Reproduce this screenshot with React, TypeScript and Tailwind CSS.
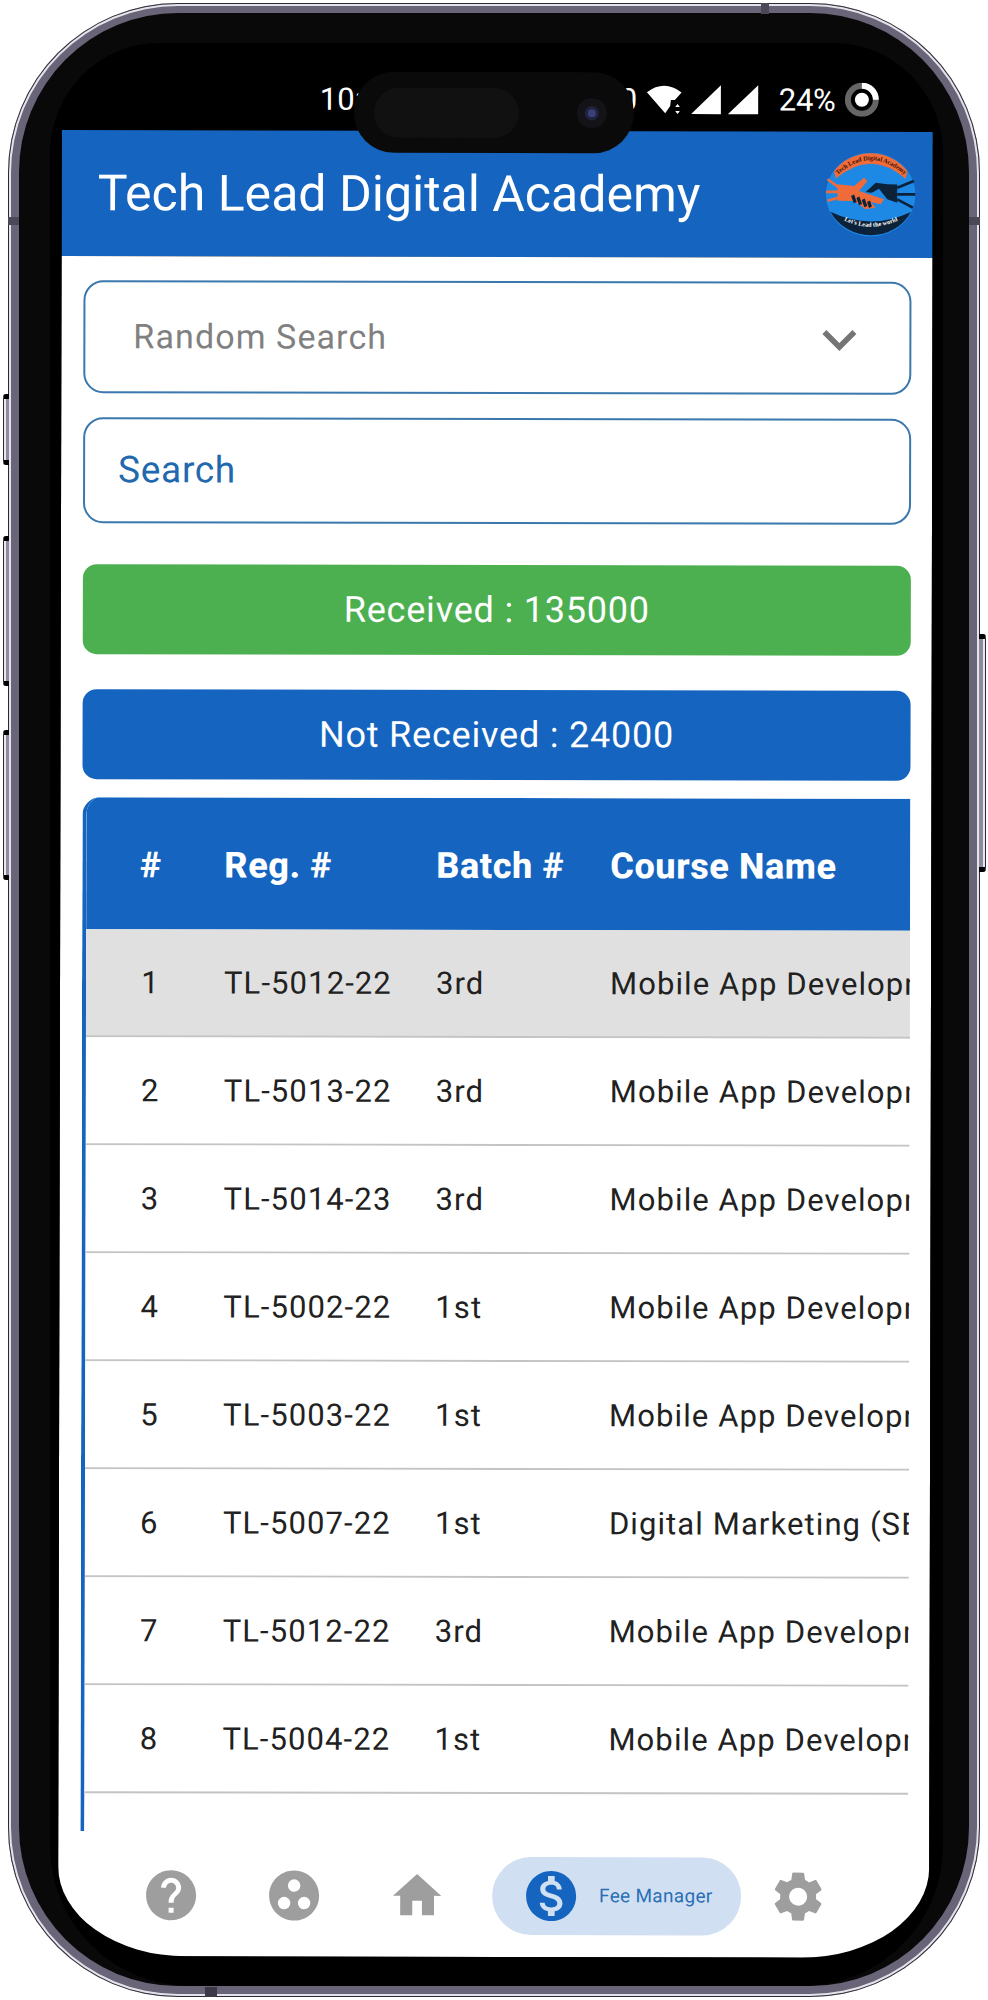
import React from 'react';
import { MdHelp, MdGroupWork, MdHome, MdMonetizationOn, MdSettings, MdKeyboardArrowDown } from 'react-icons/md';

const rows = [
    ['1', 'TL-5012-22', '3rd', 'Mobile App Development'],
    ['2', 'TL-5013-22', '3rd', 'Mobile App Development'],
    ['3', 'TL-5014-23', '3rd', 'Mobile App Development'],
    ['4', 'TL-5002-22', '1st', 'Mobile App Development'],
    ['5', 'TL-5003-22', '1st', 'Mobile App Development'],
    ['6', 'TL-5007-22', '1st', 'Digital Marketing (SEO)'],
    ['7', 'TL-5012-22', '3rd', 'Mobile App Development'],
    ['8', 'TL-5004-22', '1st', 'Mobile App Development'],
];

function Logo() {
    return (
        <svg width="90" height="84" viewBox="0 0 270 253">
            <ellipse cx="135" cy="126" rx="135" ry="126" fill="#1e88e5" />
            <path d="M24 56 A135 126 0 0 1 246 56 L240 78 Q135 -12 30 78 Z" fill="#ef6c3a" />
            <path d="M14 178 Q135 236 256 178 A135 126 0 0 1 14 178 Z" fill="#0b2239" />
            {/* orange hand */}
            <path d="M5 80 L40 105 M0 118 L40 118 M5 145 L40 135" stroke="#ef6c3a" strokeWidth="8" fill="none" />
            <path d="M35 95 L85 100 L115 75 L125 85 L100 115 L175 140 L165 155 L135 148 L150 165 L120 170 L85 145 L35 145 Z" fill="#ef6c3a" />
            {/* dark hand */}
            <path d="M265 85 L215 105 M270 125 L215 125 M262 165 L215 140" stroke="#0b2239" strokeWidth="8" fill="none" />
            <path d="M215 95 L185 95 L150 90 L120 118 L138 120 L160 108 L185 140 L215 150 Z" fill="#0b2239" />
            <path d="M76 130 l9 -4 l8 22 l-9 4 Z M92 136 l9 -4 l8 22 l-9 4 Z M108 142 l9 -4 l8 22 l-9 4 Z M124 148 l9 -4 l6 18 l-9 4 Z" fill="#0b2239" />
            <defs>
                <path id="logoTop" d="M36 66 Q135 -22 236 66" />
                <path id="logoBottom" d="M40 196 Q135 250 232 196" />
            </defs>
            <text fontSize="19" fontWeight="700" fill="#3a1208" fontFamily="'Liberation Serif', serif">
                <textPath href="#logoTop" startOffset="50%" textAnchor="middle">Tech Lead Digital Academy</textPath>
            </text>
            <text fontSize="19" fontWeight="700" fill="#ffffff" fontFamily="'Liberation Serif', serif">
                <textPath href="#logoBottom" startOffset="50%" textAnchor="middle">Let's Lead the world</textPath>
            </text>
        </svg>
    );
}

function StatusIcons() {
    return (
        <svg width="112" height="32" viewBox="0 0 336 96" fill="#ffffff" className="shrink-0">
            <path d="M0 27 Q52 -12 104 27 L84 50 L72 50 L70 68 L55 90 Z" />
            <path d="M92 62 l7 9 h-14 Z M92 92 l7 -9 h-14 Z" />
            <path d="M133 92 L222 5 V92 Z" />
            <path d="M243 92 L334 5 V92 Z" />
        </svg>
    );
}

function BatteryRing() {
    return (
        <svg width="34" height="34" viewBox="0 0 34 34" className="shrink-0">
            <circle cx="17" cy="17" r="14" fill="none" stroke="#666666" strokeWidth="6" />
            <path d="M17 3 A14 14 0 0 1 31 17" fill="none" stroke="#ffffff" strokeWidth="6" />
            <circle cx="17" cy="17" r="7" fill="#ffffff" />
        </svg>
    );
}

export default function App() {
    return (
        <div className="relative w-[988px] h-[2000px] bg-white pt-[3px] pl-[8px] font-['Roboto',sans-serif] overflow-hidden">
            {/* Side buttons */}
            <div className="absolute left-[3px] top-[394px] w-[6px] h-[71px] rounded-l-[3px] bg-[#8f8a9c] border-l border-l-[#2d2a33] border-y-[5px] border-y-black shadow-[inset_2px_0_0_#e8e6ee]"></div>
            <div className="absolute left-[3px] top-[536px] w-[6px] h-[150px] rounded-l-[3px] bg-[#8f8a9c] border-l border-l-[#2d2a33] border-y-[5px] border-y-black shadow-[inset_2px_0_0_#e8e6ee]"></div>
            <div className="absolute left-[3px] top-[730px] w-[6px] h-[150px] rounded-l-[3px] bg-[#8f8a9c] border-l border-l-[#2d2a33] border-y-[5px] border-y-black shadow-[inset_2px_0_0_#e8e6ee]"></div>
            <div className="absolute left-[979px] top-[634px] w-[7px] h-[238px] rounded-r-[3px] bg-[#8f8a9c] border-r border-r-[#2d2a33] border-y-[5px] border-y-black shadow-[inset_-2px_0_0_#e8e6ee]"></div>

            {/* Phone frame */}
            <div className="w-[972px] h-[1994px] bg-[#6a6478] rounded-[170px] pt-[10px] px-[11px] pb-[11px] shadow-[inset_0_0_0_1px_#2d2a33,inset_0_0_0_3px_#e4e2ea]">
                <div className="h-full bg-[#090909] rounded-[159px] pt-[30px] pl-[31px]">
                    <div className="w-[893px] h-full bg-black rounded-t-[110px] rounded-b-[140px] pl-[12px]">
                        <div className="w-[871px] h-[1914px] flex flex-col overflow-hidden rounded-b-[128px_90px] rotate-[0.12deg] origin-top">
                            {/* Status bar */}
                            <div className="relative h-[88px] shrink-0 flex items-center pt-[24px] text-white text-[31px] leading-none">
                                <span className="ml-[258px] w-[300px]">10:</span>
                                <span className="w-[27px]">0</span>
                                <StatusIcons />
                                <span className="ml-[20px] tracking-[-0.4px]">24%</span>
                                <span className="ml-[10px]"><BatteryRing /></span>
                                <div className="absolute left-[292px] top-[29px] w-[280px] h-[81px] rounded-[40px] bg-[#0a0a0a] z-10 flex items-center pl-[20px]">
                                    <div className="w-[145px] h-[50px] rounded-[25px] bg-[#111111]"></div>
                                    <div className="ml-[58px] w-[30px] h-[30px] rounded-full bg-[#141418] flex items-center justify-center">
                                        <div className="w-[14px] h-[14px] rounded-full bg-[#3a3f78] border-[3px] border-[#20233f]"></div>
                                    </div>
                                </div>
                            </div>

                            {/* App bar */}
                            <div className="h-[126px] shrink-0 bg-[#1565c0] flex items-center justify-between pl-[36px] pr-[17px]">
                                <span className="text-white text-[50px] leading-none">Tech Lead Digital Academy</span>
                                <Logo />
                            </div>

                            <div className="flex-1 flex flex-col bg-white">
                                {/* Body */}
                                <div className="flex-1 flex flex-col pl-[22px] pt-[24px] w-[850px]">
                                    <div className="h-[113px] rounded-[20px] border-2 border-[#3a78ad] flex items-center justify-between pl-[48px] pr-[36px]">
                                        <span className="text-[#808080] text-[34px] tracking-[1.1px]">Random Search</span>
                                        <MdKeyboardArrowDown className="text-[#757575] mt-[3px]" size={68} />
                                    </div>
                                    <div className="mt-[24px] h-[106px] rounded-[20px] border-2 border-[#3a78ad] flex items-center pl-[33px]">
                                        <span className="text-[#2168ae] text-[37px] tracking-[0.7px]">Search</span>
                                    </div>
                                    <div className="mt-[41px] h-[90px] rounded-[14px] bg-[#4caf50] text-white text-[36px] tracking-[0.8px] flex items-center justify-center">
                                        Received : 135000
                                    </div>
                                    <div className="mt-[35px] h-[90px] rounded-[14px] bg-[#1565c0] text-white text-[36px] tracking-[0.8px] flex items-center justify-center">
                                        Not Received : 24000
                                    </div>

                                    {/* Table */}
                                    <div className="mt-[18px] h-[1034px] rounded-tl-[18px] border-l-4 border-[#1565c0] overflow-hidden">
                                        <div className="h-[132px] pt-[4px] bg-[#1565c0] flex items-center text-white text-[36px] font-extrabold tracking-[0.6px] whitespace-nowrap">
                                            <div className="w-[129px] text-center">#</div>
                                            <div className="w-[221px] pl-[9px]">Reg. #</div>
                                            <div className="w-[174px]">Batch #</div>
                                            <div className="flex-1">Course Name</div>
                                        </div>
                                        {rows.map((r, i) => (
                                            <div
                                                key={i}
                                                className={`h-[108px] pt-[2px] flex items-center border-b-2 border-[#c4c4c4] text-[#212121] text-[31px] tracking-[1.1px] whitespace-nowrap ${i === 0 ? 'bg-[#e0e0e0]' : 'bg-white'}`}
                                            >
                                                <div className="w-[129px] text-center">{r[0]}</div>
                                                <div className="w-[221px] pl-[9px]">{r[1]}</div>
                                                <div className="w-[174px]">{r[2]}</div>
                                                <div className="flex-1 overflow-hidden">{r[3]}</div>
                                            </div>
                                        ))}
                                    </div>
                                </div>

                                {/* Bottom nav */}
                                <div className="h-[125px] shrink-0 flex items-start pt-[25px] pl-[83px] text-[#9e9e9e]">
                                    <div className="w-[60px] h-[78px] flex items-center justify-center"><MdHelp size={60} /></div>
                                    <div className="ml-[63px] w-[60px] h-[78px] flex items-center justify-center"><MdGroupWork size={60} /></div>
                                    <div className="ml-[63px] w-[60px] h-[78px] flex items-center justify-center"><MdHome size={58} /></div>
                                    <div className="ml-[45px] w-[249px] h-[78px] rounded-[39px] bg-[#d0e0f2] flex items-center pl-[29px]">
                                        <MdMonetizationOn className="text-[#1565c0] shrink-0" size={60} />
                                        <span className="ml-[18px] text-[#2a6fb5] text-[19px] tracking-[0.3px]">Fee Manager</span>
                                    </div>
                                    <div className="ml-[27px] w-[60px] h-[78px] flex items-center justify-center"><MdSettings size={60} /></div>
                                </div>
                            </div>
                        </div>
                    </div>
                </div>
            </div>

            {/* Antenna bands */}
            <div className="absolute left-[761px] top-[3px] w-[8px] h-[11px] bg-[#4c4858]"></div>
            <div className="absolute left-[205px] top-[1987px] w-[12px] h-[10px] bg-[#3c3846]"></div>
            <div className="absolute left-[8px] top-[217px] w-[11px] h-[8px] bg-[#4c4858]"></div>
            <div className="absolute left-[969px] top-[217px] w-[11px] h-[8px] bg-[#4c4858]"></div>
        </div>
    );
}
